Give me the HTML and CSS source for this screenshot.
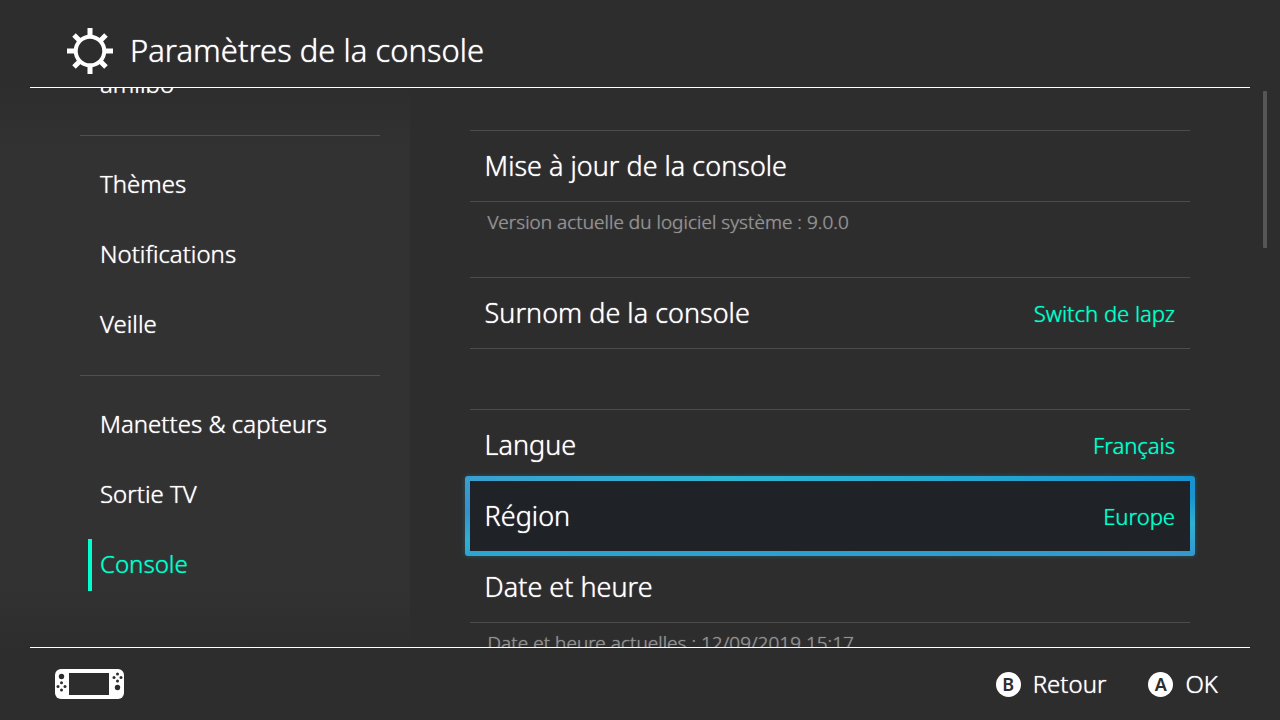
FILE: index.html
```html
<!DOCTYPE html>
<html lang="fr">
<head>
<meta charset="utf-8">
<meta name="viewport" content="width=device-width, initial-scale=1">
<title>Paramètres de la console</title>
<link rel="stylesheet" href="styles.css">
</head>
<body>
<header class="topbar">
  <svg class="gear" viewBox="0 0 48 48" aria-hidden="true">
    <circle cx="24" cy="24" r="14.3" fill="none" stroke="#fff" stroke-width="4"/>
    <g fill="none" stroke="#fff" stroke-width="5">
      <path d="M24 1v9M24 38v9M1 24h9M38 24h9"/>
      <path d="M8 8l6 6M34 34l6 6M40 8l-6 6M14 34l-6 6"/>
    </g>
  </svg>
  <h1 class="title">Paramètres de la console</h1>
</header>

<main class="main">
  <nav class="sidebar" aria-label="Catégories">
    <ul class="menu">
      <li><a class="menu-link" href="#amiibo">amiibo</a></li>
      <li class="menu-rule" role="separator"></li>
      <li><a class="menu-link" href="#themes">Thèmes</a></li>
      <li><a class="menu-link" href="#notifications">Notifications</a></li>
      <li><a class="menu-link" href="#veille">Veille</a></li>
      <li class="menu-rule" role="separator"></li>
      <li><a class="menu-link" href="#manettes">Manettes &amp; capteurs</a></li>
      <li><a class="menu-link" href="#sortie">Sortie TV</a></li>
      <li><a class="menu-link menu-link-current" href="#console" aria-current="page">Console</a></li>
    </ul>
  </nav>

  <section class="content">
    <div class="group">
      <button class="row" type="button"><span>Mise à jour de la console</span></button>
    </div>
    <p class="note">Version actuelle du logiciel système : 9.0.0</p>
    <div class="group">
      <button class="row" type="button"><span>Surnom de la console</span><span class="value">Switch de lapz</span></button>
    </div>
    <div class="group group-spaced">
      <button class="row" type="button"><span>Langue</span><span class="value">Français</span></button>
      <button class="row row-selected" type="button"><span>Région</span><span class="value">Europe</span></button>
      <button class="row" type="button"><span>Date et heure</span></button>
    </div>
    <p class="note">Date et heure actuelles : 12/09/2019 15:17</p>
  </section>
  <div class="scroll-thumb"></div>
</main>

<footer class="bottombar">
  <svg class="handheld" viewBox="0 0 70 30" aria-hidden="true">
    <rect width="69" height="30" rx="6" fill="#fff"/>
    <rect x="14" y="4" width="40" height="22" fill="#2d2d2d"/>
    <g fill="#2d2d2d">
      <circle cx="6.500" cy="7.500" r="2.700"/>
      <circle cx="6.500" cy="13.800" r="1.500"/><circle cx="6.500" cy="21" r="1.500"/>
      <circle cx="3" cy="17.400" r="1.500"/><circle cx="10" cy="17.400" r="1.500"/>
      <circle cx="62.500" cy="18.500" r="2.700"/>
      <circle cx="62.500" cy="5" r="1.500"/><circle cx="62.500" cy="12" r="1.500"/>
      <circle cx="59" cy="8.500" r="1.500"/><circle cx="66" cy="8.500" r="1.500"/>
    </g>
  </svg>
  <div class="hints">
    <button class="hint" type="button"><span class="key">B</span>Retour</button>
    <button class="hint" type="button"><span class="key">A</span>OK</button>
  </div>
</footer>
</body>
</html>
```
FILE: styles.css
```css
* {
  box-sizing: border-box;
}

body {
  margin: 0;
  height: 100vh;
  display: flex;
  flex-direction: column;
  overflow: hidden;
  background: #2d2d2d;
  color: #fff;
  font-family: "Noto Sans", "Open Sans", sans-serif;
  font-weight: 300;
}

button {
  margin: 0;
  padding: 0;
  border: 0;
  background: none;
  color: inherit;
  font: inherit;
  text-align: left;
}

.title,
.menu-link,
.row,
.note,
.hint {
  text-shadow: 0 0 1px currentColor;
}

.topbar {
  display: flex;
  align-items: center;
  gap: 16px;
  margin: 0 30px;
  padding: 15px 36px 0;
  height: 88px;
  border-bottom: 1px solid #fff;
}

.gear {
  width: 48px;
  height: 48px;
}

.title {
  margin: 0;
  padding-bottom: 2px;
  font-size: 31px;
  font-weight: 300;
  line-height: 40px;
}

.main {
  position: relative;
  flex: 1;
  min-height: 0;
  display: flex;
  overflow: hidden;
}

.sidebar {
  flex: 0 0 32%;
  overflow: hidden;
  padding: 0 30px 0 80px;
  background: linear-gradient(#2d2d2d, #323232 60px, #323232 calc(100% - 60px), #2d2d2d);
}

/* The list is scrolled by 38px, so its first entry is partly hidden. */
.menu {
  list-style: none;
  margin: -38px 0 0;
  padding: 0;
}

.menu-link {
  display: block;
  padding: 0 20px 2px;
  color: #fff;
  font-size: 24px;
  line-height: 68px;
  text-decoration: none;
}

.menu-link-current {
  position: relative;
  color: #00ffcb;
}

.menu-link-current::before {
  content: "";
  position: absolute;
  left: 8px;
  top: 9px;
  bottom: 9px;
  width: 4px;
  background: #00ffcb;
}

.menu-rule {
  height: 1px;
  margin: 15px 0 14px;
  background: #505050;
}

.content {
  flex: 1;
  min-width: 0;
  padding: 42px 90px 0 60px;
}

.group {
  border-top: 1px solid #4d4d4d;
}

.group-spaced {
  margin-top: 60px;
}

.row {
  display: flex;
  align-items: center;
  justify-content: space-between;
  width: 100%;
  height: 71px;
  padding: 0 15px;
  border-bottom: 1px solid #4d4d4d;
  font-size: 27px;
  line-height: 36px;
}

.value {
  color: #00ffcb;
  font-size: 22px;
}

.row-selected {
  position: relative;
  z-index: 1;
  border-bottom-color: transparent;
}

.row-selected::before {
  content: "";
  position: absolute;
  z-index: -2;
  inset: -5px;
  border-radius: 3px;
  background:
    linear-gradient(90deg, #3a9fd0, #2fb5d0 36%, #2aacd0 60%, #1893cf) top / 100% 5px no-repeat,
    linear-gradient(90deg, #2da5d2, #2c9fd2 50%, #3498d0) bottom / 100% 5px no-repeat,
    linear-gradient(#3a9fd0, #3590cc 45%, #2fb0d2 80%, #2da5d2) left / 5px 100% no-repeat,
    linear-gradient(#1893cf 25%, #30b0d2 60%, #3498d0) right / 5px 100% no-repeat;
  box-shadow: 0 0 5px rgba(45, 180, 200, 0.3);
}

.row-selected::after {
  content: "";
  position: absolute;
  z-index: -1;
  inset: 0;
  background: #1f2227;
}

.note {
  margin: 0;
  padding: 5px 18px 40px;
  font-size: 19px;
  line-height: 30px;
  color: #929292;
}

.scroll-thumb {
  position: absolute;
  top: 3px;
  right: 13px;
  width: 4px;
  height: 28%;
  border-radius: 1px;
  background: #565656;
}

.bottombar {
  display: flex;
  align-items: center;
  justify-content: space-between;
  margin: 0 30px;
  padding: 0 32px 0 25px;
  height: 73px;
  border-top: 1px solid #fff;
}

.handheld {
  width: 70px;
  height: 30px;
}

.hints {
  display: flex;
  gap: 42px;
}

.hint {
  display: flex;
  align-items: center;
  gap: 12px;
  font-size: 24px;
  line-height: 32px;
}

.key {
  width: 25px;
  height: 25px;
  border-radius: 50%;
  background: #fff;
  color: #2d2d2d;
  font-size: 18px;
  font-weight: 600;
  line-height: 25px;
  text-align: center;
  text-shadow: none;
}
```
